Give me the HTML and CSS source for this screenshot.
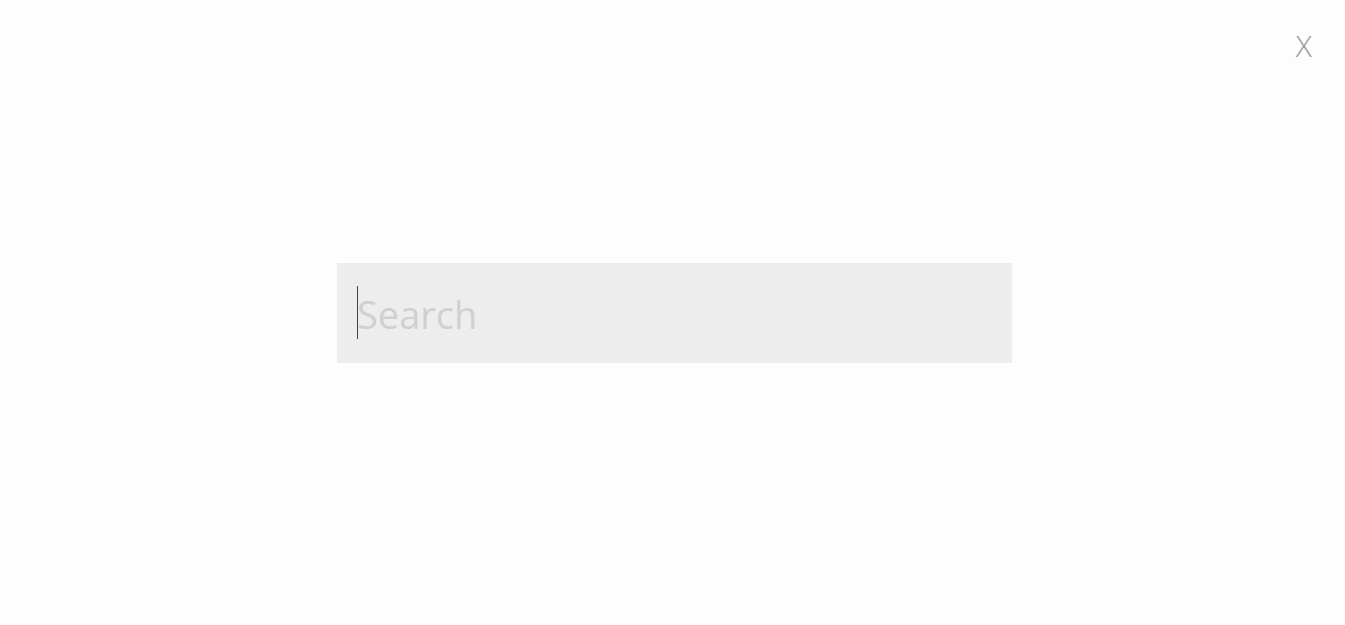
FILE: index.html
```html
<!DOCTYPE html>
<html lang="en">
<head>
<meta charset="utf-8">
<title>Search</title>
<link rel="stylesheet" href="styles.css">
</head>
<body>
<div class="overlay">
  <button class="close" type="button" aria-label="Close">X</button>
  <form class="search">
    <span class="caret"></span>
    <input class="search-input" type="text" placeholder="Search">
  </form>
</div>
</body>
</html>
```
FILE: styles.css
```css
html, body {
  margin: 0;
  padding: 0;
  height: 100%;
}
body {
  background: #fdfdfd;
  font-family: "Open Sans", "Noto Sans", sans-serif;
}
.overlay {
  height: 100vh;
  display: flex;
  align-items: center;
  justify-content: center;
}
.close {
  position: absolute;
  top: 28px;
  right: 33px;
  border: 0;
  background: none;
  padding: 0;
  font-family: "Open Sans", sans-serif;
  font-weight: 300;
  font-size: 30px;
  line-height: 36px;
  color: #9a9a9a;
  cursor: pointer;
}
.search {
  position: relative;
  width: 675px;
  height: 100px;
  margin-left: 4px;
  background: #ededed;
  display: flex;
  align-items: center;
}
.search-input {
  flex: 1;
  height: 100%;
  border: 0;
  outline: none;
  background: transparent;
  padding: 2px 20px 0;
  box-sizing: border-box;
  font-family: "Open Sans", "Noto Sans", sans-serif;
  font-size: 38px;
  color: #333;
  caret-color: transparent;
}
.search-input::placeholder {
  color: #d0d0d0;
}
.caret {
  position: absolute;
  left: 20px;
  top: 23px;
  width: 1px;
  height: 53px;
  background: #444;
}
```
